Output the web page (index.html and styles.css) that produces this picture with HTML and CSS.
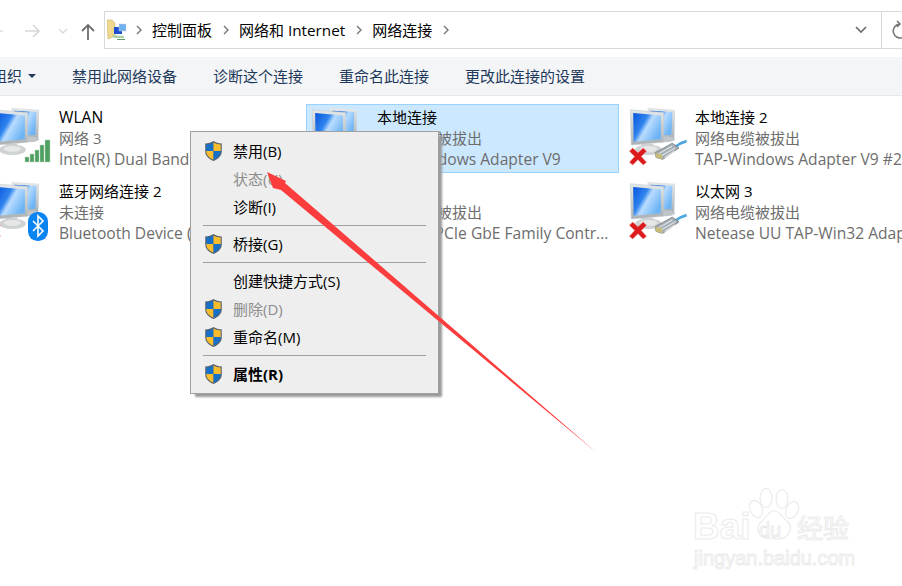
FILE: index.html
```html
<!DOCTYPE html>
<html lang="zh">
<head>
<meta charset="utf-8">
<title>网络连接</title>
<link rel="stylesheet" href="styles.css">
</head>
<body>
<svg class="defs" width="0" height="0" aria-hidden="true">
  <defs>
    <linearGradient id="scr" x1="0" y1="0" x2="1" y2="0.6">
      <stop offset="0" stop-color="#0a55dc"/><stop offset="0.42" stop-color="#2f84ee"/><stop offset="0.58" stop-color="#b9dcff"/><stop offset="1" stop-color="#6db4f5"/>
    </linearGradient>
    <linearGradient id="frame" x1="0" y1="0" x2="0" y2="1">
      <stop offset="0" stop-color="#e4e8ea"/><stop offset="1" stop-color="#a9b0b4"/>
    </linearGradient>
    <symbol id="monitors" viewBox="0 0 64 66" overflow="visible">
      <path d="M21 4l29 2-1 30-27 1z" fill="url(#frame)"/>
      <path d="M24 7l23 1.500-1 24-21 .5z" fill="url(#scr)"/>
      <ellipse cx="40" cy="37" rx="10" ry="3" fill="#c0c6c9"/>
      <path d="M3 6l35 3v31L4 43z" fill="url(#frame)" stroke="#c4cacd" stroke-width=".6"/>
      <path d="M6 9.500l29 2.500v25L6.500 39.500z" fill="url(#scr)"/>
      <path d="M15 42h12l1 4H14z" fill="#c9cdd0"/>
      <ellipse cx="22" cy="48" rx="14" ry="5.500" fill="#d0d3d4"/>
      <ellipse cx="22" cy="47" rx="9" ry="3" fill="#e6e8e8"/>
    </symbol>
    <symbol id="redx" viewBox="0 0 64 66" overflow="visible">
      <path d="M2 49.500l3.500-3.500 5.500 5 5.500-5 3.500 3.500-5.500 5.500 5.500 6-3.500 3-5.500-5.500-5.500 5.500-3.500-3 5.500-6z" fill="#dc1c1c" stroke="#f4a0a0" stroke-width=".5"/>
    </symbol>
    <symbol id="cable" viewBox="0 0 64 66" overflow="visible">
      <path d="M50 45c4-3 8-5 12-6" fill="none" stroke="#4fa8e0" stroke-width="3"/>
      <path d="M29 51l18-10 7 5-17 12-7-2z" fill="#a3adb3" stroke="#6f777d" stroke-width=".8"/>
      <path d="M33 52l14-8M36 54l14-8M39 56l11-7" stroke="#e4e8ea" stroke-width="1.100"/>
      <path d="M29 51l1 5 7 2-1-5z" fill="#c8bc78"/>
    </symbol>
    <symbol id="shield" viewBox="0 0 20 22">
      <path d="M10 1c2.500 1.700 5 2.400 8.300 2.600v7.600c0 4.500-3.400 7.700-8.300 9.800-4.900-2.100-8.300-5.300-8.300-9.800V3.600C5 3.400 7.500 2.700 10 1z" fill="#5a6470"/>
      <path d="M10 2.500V11H2.800V4.600C5.500 4.400 7.800 3.800 10 2.500z" fill="#1670c8"/>
      <path d="M10 2.500c2.200 1.300 4.500 1.900 7.200 2.100V11H10z" fill="#f8bd2c"/>
      <path d="M2.800 11H10v8.700c-4.200-1.900-7.200-4.600-7.200-8.500z" fill="#f8bd2c"/>
      <path d="M10 11h7.200v.2c0 3.900-3 6.600-7.200 8.500z" fill="#1670c8"/>
    </symbol>
  </defs>
</svg>

<div class="window">
  <header class="navbar">
    <svg class="nav-icons" width="104" height="38" viewBox="0 0 104 38">
      <path d="M-3 20h6" stroke="#dcdcdc" stroke-width="1.500" fill="none"/>
      <path d="M25 20h14M33 14l6 6-6 6" stroke="#d8d8d8" stroke-width="1.600" fill="none"/>
      <path d="M59 18l4 4 4-4" stroke="#dadada" stroke-width="1.500" fill="none"/>
      <path d="M88 29V15M82 20l6-6 6 6" stroke="#6e6e6e" stroke-width="1.800" fill="none"/>
    </svg>
    <div class="address">
      <svg class="folder" width="21" height="22" viewBox="0 0 21 22">
        <path d="M0 1h5l3 3v13L1 20z" fill="#efd98e" stroke="#cdb161" stroke-width=".6"/>
        <rect x="7" y="8" width="8" height="7" fill="#1c50d0"/>
        <rect x="12" y="5" width="7" height="7" fill="#6fb0ee" stroke="#c8d0d8" stroke-width=".5"/>
        <path d="M5 16l12 1v2H7z" fill="#a9d2a9"/>
        <path d="M10 20.500h8" stroke="#5f9a6a" stroke-width="1"/>
      </svg>
      <svg class="chev" width="8" height="10" viewBox="0 0 8 10"><path d="M2 1l4 4-4 4" fill="none" stroke="#777" stroke-width="1.400"/></svg>
      <span class="crumb">控制面板</span>
      <svg class="chev" width="8" height="10" viewBox="0 0 8 10"><path d="M2 1l4 4-4 4" fill="none" stroke="#777" stroke-width="1.400"/></svg>
      <span class="crumb">网络和 <span class="en-crumb">Internet</span></span>
      <svg class="chev" width="8" height="10" viewBox="0 0 8 10"><path d="M2 1l4 4-4 4" fill="none" stroke="#777" stroke-width="1.400"/></svg>
      <span class="crumb">网络连接</span>
      <svg class="chev" width="8" height="10" viewBox="0 0 8 10"><path d="M2 1l4 4-4 4" fill="none" stroke="#777" stroke-width="1.400"/></svg>
      <svg class="drop" width="14" height="10" viewBox="0 0 14 10"><path d="M2 2l5 5 5-5" fill="none" stroke="#6e6e6e" stroke-width="1.700"/></svg>
      <div class="refresh">
        <svg width="20" height="20" viewBox="0 0 20 20"><path d="M12 4a7 7 0 1 0 6 3M9 1l3 3-3 3" fill="none" stroke="#777" stroke-width="1.600"/></svg>
      </div>
    </div>
  </header>

  <nav class="toolbar">
    <span class="tool first">组织<i class="caret"></i></span>
    <span class="tool">禁用此网络设备</span>
    <span class="tool">诊断这个连接</span>
    <span class="tool">重命名此连接</span>
    <span class="tool">更改此连接的设置</span>
  </nav>

  <main class="grid">
    <div class="item">
      <svg class="ico" viewBox="0 3 64 63">
        <use href="#monitors"/>
        <g fill="#4f9f60" stroke="#b9dcc0" stroke-width=".5">
          <rect x="35" y="53" width="4" height="5"/><rect x="40" y="50" width="4" height="8"/><rect x="45" y="46" width="4" height="12"/><rect x="50" y="41" width="4" height="17"/><rect x="55" y="36" width="5" height="22"/>
        </g>
      </svg>
      <div class="txt"><div class="name en">WLAN</div><div class="sub">网络 3</div><div class="sub en">Intel(R) Dual Band Wireless-AC</div></div>
    </div>
    <div class="item selected">
      <svg class="ico" viewBox="0 3 64 63"><use href="#monitors"/></svg>
      <div class="txt"><div class="name">本地连接</div><div class="sub">网络电缆被拔出</div><div class="sub en">TAP-Windows Adapter V9</div></div>
    </div>
    <div class="item">
      <svg class="ico" viewBox="0 3 64 63"><use href="#monitors"/><use href="#cable"/><use href="#redx"/></svg>
      <div class="txt"><div class="name">本地连接 2</div><div class="sub">网络电缆被拔出</div><div class="sub en">TAP-Windows Adapter V9 #2</div></div>
    </div>
    <div class="item">
      <svg class="ico" viewBox="0 3 64 63">
        <use href="#monitors"/><use href="#redx" x="-10"/>
        <rect x="38" y="34" width="20" height="29" rx="9.500" fill="#0a84f0"/>
        <path d="M43 43l10 10-5 5V38l5 5-10 10" fill="none" stroke="#fff" stroke-width="1.600"/>
      </svg>
      <div class="txt"><div class="name">蓝牙网络连接 2</div><div class="sub">未连接</div><div class="sub en">Bluetooth Device (Personal Area</div></div>
    </div>
    <div class="item">
      <svg class="ico" viewBox="0 3 64 63"><use href="#monitors"/><use href="#cable"/><use href="#redx"/></svg>
      <div class="txt"><div class="name">以太网</div><div class="sub">网络电缆被拔出</div><div class="sub en">Realtek PCIe GbE Family Contr...</div></div>
    </div>
    <div class="item">
      <svg class="ico" viewBox="0 3 64 63"><use href="#monitors"/><use href="#cable"/><use href="#redx"/></svg>
      <div class="txt"><div class="name">以太网 3</div><div class="sub">网络电缆被拔出</div><div class="sub en">Netease UU TAP-Win32 Adapter</div></div>
    </div>
  </main>

  <div class="menu">
    <div class="row"><svg class="sh" viewBox="0 0 20 22"><use href="#shield"/></svg><span class="lbl">禁用(B)</span></div>
    <div class="row off"><span class="slot"></span><span class="lbl">状态(U)</span></div>
    <div class="row"><span class="slot"></span><span class="lbl">诊断(I)</span></div>
    <div class="sep"></div>
    <div class="row"><svg class="sh" viewBox="0 0 20 22"><use href="#shield"/></svg><span class="lbl">桥接(G)</span></div>
    <div class="sep"></div>
    <div class="row"><span class="slot"></span><span class="lbl">创建快捷方式(S)</span></div>
    <div class="row off"><svg class="sh" viewBox="0 0 20 22"><use href="#shield"/></svg><span class="lbl">删除(D)</span></div>
    <div class="row"><svg class="sh" viewBox="0 0 20 22"><use href="#shield"/></svg><span class="lbl">重命名(M)</span></div>
    <div class="sep"></div>
    <div class="row bold"><svg class="sh" viewBox="0 0 20 22"><use href="#shield"/></svg><span class="lbl">属性(R)</span></div>
  </div>

  <svg class="arrow" width="902" height="586" viewBox="0 0 902 586">
    <polygon points="267,172 286,181 285,183 597,453 281,190 273,188" fill="#fb3d3d"/>
  </svg>

  <div class="mark">
    <svg class="paw" width="60" height="54" viewBox="0 0 60 54">
      <g fill="none" stroke="#ebebeb" stroke-width="1.200">
        <ellipse cx="13" cy="21" rx="6" ry="9" transform="rotate(-25 13 21)"/>
        <ellipse cx="23" cy="10" rx="6" ry="9.500"/>
        <ellipse cx="39" cy="11" rx="6" ry="9.500"/>
        <ellipse cx="49" cy="22" rx="6" ry="9" transform="rotate(25 49 22)"/>
        <path d="M31 23c6 0 8 6 13 10 7 6 2 18-9 18-3 0-5-1-7-1-11 2-17-9-10-16 5-4 7-11 13-11z"/>
      </g>
    </svg>
    <span class="bai">Bai</span>
    <span class="du">du</span>
    <span class="jy">经验</span>
    <span class="url">jingyan.baidu.com</span>
  </div>
</div>
</body>
</html>
```
FILE: styles.css
```css
* { box-sizing: border-box; }
html, body { margin: 0; padding: 0; }
body {
  width: 902px;
  height: 586px;
  overflow: hidden;
  background: #fff;
  font-family: "Open Sans", "Noto Sans CJK SC", sans-serif;
  font-size: 15px;
  color: #000;
}
.defs { position: absolute; }
.window { position: relative; width: 902px; height: 586px; overflow: hidden; }
.en { font-size: 15.600px; }
.en-crumb { font-size: 15.300px; }

.navbar { display: flex; height: 57px; padding: 11px 0 8px; }
.nav-icons { flex: none; overflow: visible; display: block; }
.address {
  flex: none;
  width: 820px;
  display: flex;
  align-items: center;
  border: 1px solid #d9d9d9;
  border-right: 0;
  padding-left: 2px;
}
.folder { flex: none; margin-right: 7px; }
.chev { flex: none; margin-right: 9px; }
.crumb { line-height: 20px; margin-right: 10px; white-space: nowrap; }
.drop { flex: none; margin-left: auto; margin-right: 13px; }
.refresh {
  flex: none;
  width: 43px;
  height: 100%;
  border-left: 1px solid #d9d9d9;
  display: flex;
  align-items: center;
  padding-left: 6px;
}

.toolbar {
  height: 39px;
  display: flex;
  align-items: center;
  gap: 36px;
  background: #f3f5f7;
  border-bottom: 1px solid #e6e8ea;
  color: #1e395b;
  font-size: 15px;
  white-space: nowrap;
}
.tool { line-height: 20px; }
.tool.first { display: flex; align-items: center; margin-left: -8px; width: 44px; }
.caret {
  margin-left: 6px;
  border-left: 4px solid transparent;
  border-right: 4px solid transparent;
  border-top: 4px solid #1e395b;
}

.grid {
  display: grid;
  grid-template-columns: repeat(3, 313px);
  grid-auto-rows: 69px;
  gap: 5px;
  margin: 8px 0 0 -12px;
}
.item {
  display: flex;
  gap: 5px;
  padding: 2px 0 2px 1px;
  border: 1px solid transparent;
  min-width: 0;
}
.item.selected { background: #cce8ff; border-color: #99d1ff; }
.ico { flex: none; width: 64px; height: 63px; overflow: visible; }
.txt { min-width: 0; white-space: nowrap; line-height: 21px; }
.sub { color: #6d6d6d; }

.menu {
  position: absolute;
  left: 190px;
  top: 131px;
  width: 249px;
  height: 263px;
  padding: 5px 12px 5px 1px;
  background: #eee;
  border: 1px solid #a0a0a0;
  box-shadow: 4px 4px 2px -1px #9a9a9a;
  font-size: 15px;
}
.row { display: flex; align-items: center; height: 28px; padding-left: 11px; gap: 9px; }
.row.off { color: #8c8c8c; }
.row.bold { font-weight: 700; }
.lbl { padding-bottom: 2px; }
.sh, .slot { flex: none; width: 21px; height: 22px; display: block; }
.sep { height: 9px; margin-left: 11px; position: relative; }
.sep::before { content: ""; display: block; height: 1px; background: #a0a0a0; position: absolute; left: 0; right: 0; top: 4px; }

.arrow { position: absolute; left: 0; top: 0; pointer-events: none; }

.mark { position: absolute; left: 690px; top: 488px; width: 170px; height: 85px; }
.mark span {
  position: absolute;
  color: #fff;
  -webkit-text-stroke: 1px #ebebeb;
  white-space: nowrap;
  font-family: "Liberation Sans", sans-serif;
}
.paw { position: absolute; left: 53px; top: 0; }
.bai { left: 3px; top: 19px; font-size: 37px; line-height: 40px; font-weight: 700; }
.du { left: 69px; top: 31px; font-size: 20px; line-height: 22px; }
.mark .jy { left: 107px; top: 23px; font-size: 26px; line-height: 32px; font-family: "Noto Sans CJK SC", sans-serif; }
.url { left: 4px; top: 58px; font-size: 20px; line-height: 24px; }
```
